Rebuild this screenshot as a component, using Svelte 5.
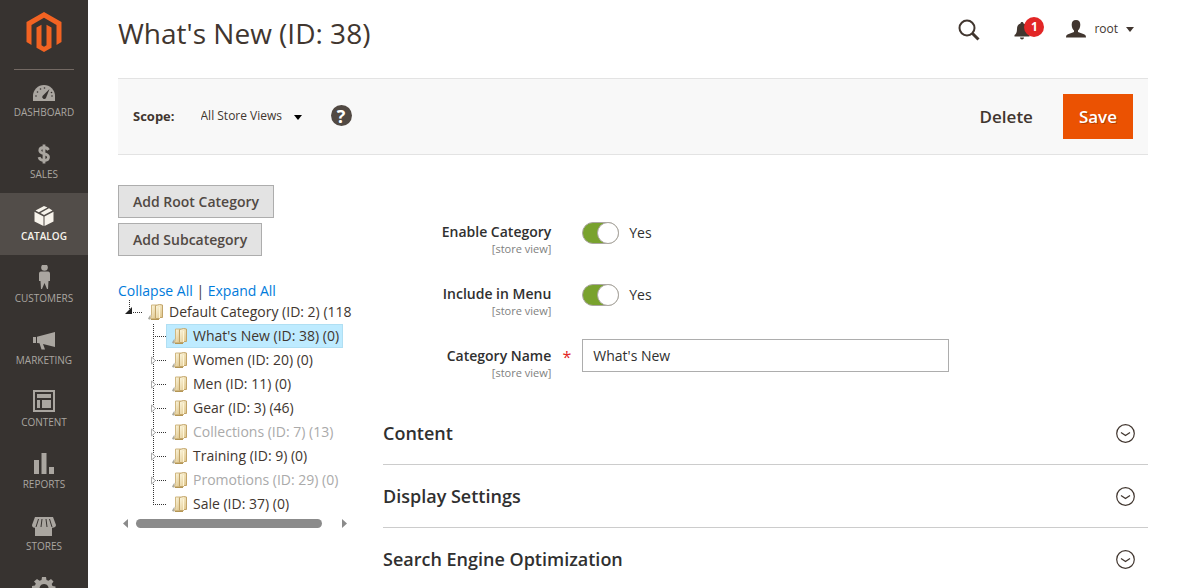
<script>
  const menu = [
    { id: 'dashboard', label: 'Dashboard' },
    { id: 'sales', label: 'Sales' },
    { id: 'catalog', label: 'Catalog' },
    { id: 'customers', label: 'Customers' },
    { id: 'marketing', label: 'Marketing' },
    { id: 'content', label: 'Content' },
    { id: 'reports', label: 'Reports' },
    { id: 'stores', label: 'Stores' },
    { id: 'system' }
  ];

  const categories = [
    { id: 38, name: "What's New", count: 0, leaf: true },
    { id: 20, name: 'Women', count: 0 },
    { id: 11, name: 'Men', count: 0 },
    { id: 3, name: 'Gear', count: 46 },
    { id: 7, name: 'Collections', count: 13, disabled: true },
    { id: 9, name: 'Training', count: 0 },
    { id: 29, name: 'Promotions', count: 0, disabled: true },
    { id: 37, name: 'Sale', count: 0, leaf: true }
  ];

  const sections = ['Content', 'Display Settings', 'Search Engine Optimization'];

  let selected = $state(38);
  let enabled = $state(true);
  let inMenu = $state(true);
  let name = $state("What's New");
</script>

{#snippet folder()}
  <svg class="folder" width="16" height="16" viewBox="0 0 16 16" aria-hidden="true">
    <defs>
      <linearGradient id="paper" x1="0" y1="0" x2="1" y2="1">
        <stop offset="0" stop-color="#fffbe6" />
        <stop offset="1" stop-color="#dcc183" />
      </linearGradient>
    </defs>
    <path d="M0 14.500l2.500-4v5H1z" fill="#a9a9a0" />
    <path d="M3.500 1h5v13.500h-6l1-3z" fill="url(#paper)" stroke="#d0b780" />
    <path d="M7.500 1.500l4-1 3 .5v12.500h-3v1h-4z" fill="url(#paper)" stroke="#c2a468" />
    <path d="M11.500 3v11" stroke="#fff5d5" />
    <path d="M3 15.500h8" stroke="#b39554" />
  </svg>
{/snippet}

<div class="page">
  <aside class="sidebar">
    <a class="logo" href="#home" aria-label="Home">
      <svg width="36" height="40" viewBox="0 0 36 40">
        <path fill="#f26322" d="M18 0L0.500 10v20l5 2.900V13L18 5.800 30.500 13v19.900l5-2.900V10z" />
        <path fill="#f26322" d="M10.500 15.500v20.300L18 40l7.500-4.200V15.500l-5-2.800v20.600L18 34.800l-2.500-1.500V12.700z" />
      </svg>
    </a>
    <nav>
      {#each menu as item}
        <a class="item" class:active={item.id === 'catalog'} href="#{item.id}" aria-label={item.id}>
          <svg width="26" height="26" viewBox="0 0 26 26" fill="currentColor" aria-hidden="true">
            {#if item.id === 'dashboard'}
              <path d="M2 22v-5a11 11 0 0 1 22 0v5z" />
              <g class="cut"><path d="M18.500 10l-3.500 9a2 2 0 0 1-3.500-2z" /><circle cx="5" cy="17" r=".8" /><circle cx="6.500" cy="13" r=".8" /><circle cx="9.500" cy="10" r=".8" /><circle cx="13.500" cy="9" r=".8" /><circle cx="21" cy="17" r=".8" /><circle cx="20.500" cy="13.500" r=".8" /></g>
            {:else if item.id === 'sales'}
              <path d="M17.500 9C16.500 7 15 6.500 13 6.500c-2.600 0-4.200 1-4.200 2.900 0 4.300 8.700 2 8.700 6.600 0 2.200-1.800 3.500-4.500 3.500-2.500 0-4.300-1-5-3.300M13 3.500v19" fill="none" stroke="currentColor" stroke-width="2.800" />
            {:else if item.id === 'catalog'}
              <path d="M13 3l3.500 1.600-8.700 4.600L4.500 7.500zM18 5.300l3.500 2.200-8.500 4.600-3.500-2zM3.500 8.800l9 4.600V23l-9-4.500zM22.500 8.800V18.500l-9 4.500v-9.600z" />
            {:else if item.id === 'customers'}
              <circle cx="13.500" cy="2.500" r="3.300" />
              <path d="M10 6.500h7c1.500 0 2 1 2 2.500V16h-1.500L17 24h-1l-2.500-6-2.500 6h-1l-.5-8H8V9c0-1.500.5-2.500 2-2.500z" />
            {:else if item.id === 'marketing'}
              <path d="M2 10h3v6H2zM6 9.800L24 5v15L12 17l2 5.500h-3.500L8.500 16.300 6 16z" />
            {:else if item.id === 'content'}
              <path fill-rule="evenodd" d="M2 1h22v22H2zM4 3v18h18V3zM6 5h14v4H6zM6 11h3v8H6zM11 11h9v8h-9z" />
            {:else if item.id === 'reports'}
              <path d="M3 9h5v14H3zM10.500 2h5v21h-5zM18 16h5v7h-5z" />
            {:else if item.id === 'stores'}
              <path d="M4 4h18l3 8c0 2.500-3 3-4 2.500v8.500H4v-8.500c-1 .5-3 0-3-2.500z" />
              <path class="cut-line" d="M7.500 6L5 14M11 6l-1 8M15 6l1 8M18.500 6l2.500 8" />
            {:else}
              <path fill-rule="evenodd" d="M11 2h4l.5 3 2 .8L20 4l2.500 2.500-1.800 2.500.8 2 3 .5v4l-3 .5-.8 2L22 20l-3 3-2.500-1.800-2 .8L14 25h-3l-.5-3-2-.8L6 23l-3-3 1.800-2.500-.8-2-3-.5v-4l3-.5.8-2L3 6.500 6 4l2.500 1.800 2-.8zM13 9a4.500 4.500 0 1 0 .1 0z" />
            {/if}
          </svg>
          {#if item.label}<span>{item.label}</span>{/if}
        </a>
      {/each}
    </nav>
  </aside>

  <main>
    <header>
      <h1>What's New (ID: 38)</h1>
      <div class="tools">
        <button class="plain" aria-label="Search">
          <svg width="22" height="22" viewBox="0 0 22 22" fill="none" stroke="#41362f">
            <circle cx="9" cy="9" r="7.500" stroke-width="2" />
            <path d="M14.500 14.500l6 6" stroke-width="3" />
          </svg>
        </button>
        <button class="bell" aria-label="Notifications">
          <svg width="16" height="18" viewBox="0 0 16 18" fill="#41362f">
            <path d="M8 0c1 0 1.500.7 1.500 1.500C12 2.200 13 4 13 7c0 3.500 1 5 2.500 6v1.500H.5V13C2 12 3 10.500 3 7c0-3 1-4.800 3.500-5.500C6.500.7 7 0 8 0zM6 15.500h4c0 2.500-4 2.500-4 0z" />
          </svg>
          <span class="badge">1</span>
        </button>
        <button class="account">
          <svg width="20" height="18" viewBox="0 0 20 18" fill="#41362f">
            <path d="M10 0c3 0 4.300 2 4.300 4.800 0 2.500-1 4.700-2.300 5.700v1.500l6 2.200c1.200.5 2 1.300 2 3.300H0c0-2 .8-2.800 2-3.300L8 12v-1.500C6.700 9.500 5.700 7.300 5.700 4.800 5.700 2 7 0 10 0z" />
          </svg>
          <span>root</span>
          <svg width="8" height="5" viewBox="0 0 8 5" fill="#41362f"><path d="M0 0h8L4 5z" /></svg>
        </button>
      </div>
    </header>

    <div class="toolbar">
      <div class="store">
        <label for="scope">Scope:</label>
        <div class="scope">
          <select id="scope">
            <option>All Store Views</option>
          </select>
          <svg width="8" height="9" viewBox="0 0 8 9"><path d="M0 4h8L4 9z" /></svg>
        </div>
        <button class="help" aria-label="Help">?</button>
      </div>
      <div class="actions">
        <button class="delete">Delete</button>
        <button class="save">Save</button>
      </div>
    </div>

    <div class="columns">
      <div class="categories">
        <button class="add">Add Root Category</button>
        <button class="add">Add Subcategory</button>

        <div class="tree-actions">
          <a href="#collapse">Collapse All</a> | <a href="#expand">Expand All</a>
        </div>

        <div class="tree">
          <div class="node">
            <svg width="24" height="24" viewBox="0 0 24 24" aria-hidden="true">
              <path class="dots" d="M11.500 0v10M15 12.500h9" />
              <path d="M14 7v7H7z" fill="#222" />
            </svg>
            <a href="#category-2">{@render folder()}Default Category (ID: 2) (118</a>
          </div>
          <ul>
            {#each categories as category, i}
              <li class="node">
                <svg width="24" height="24" viewBox="0 0 24 24" aria-hidden="true">
                  <path class="dots" d={i === categories.length - 1 ? 'M11.500 0v13' : 'M11.500 0v24'} />
                  <path class="dots" d="M13 12.500h11" />
                  {#if !category.leaf}
                    <path d="M9.500 9v7l4-3.500z" fill="#fff" stroke="#aaa" />
                  {/if}
                </svg>
                <a
                  href="#category-{category.id}"
                  class:selected={selected === category.id}
                  class:disabled={category.disabled}
                  onclick={() => (selected = category.id)}
                >
                  {@render folder()}{category.name} (ID: {category.id}) ({category.count})
                </a>
              </li>
            {/each}
          </ul>
          <div class="scrollbar">
            <svg width="5" height="9" viewBox="0 0 5 9"><path d="M5 0v9L0 4.500z" /></svg>
            <div class="track"><div class="thumb"></div></div>
            <svg width="5" height="9" viewBox="0 0 5 9"><path d="M0 0v9l5-4.500z" /></svg>
          </div>
        </div>
      </div>

      <div class="details">
        <form>
          <div class="field">
            <label for="enabled">Enable Category<small>[store view]</small></label>
            <div class="control switch">
              <input id="enabled" class="toggle" type="checkbox" bind:checked={enabled} />
              <span>{enabled ? 'Yes' : 'No'}</span>
            </div>
          </div>
          <div class="field">
            <label for="in-menu">Include in Menu<small>[store view]</small></label>
            <div class="control switch">
              <input id="in-menu" class="toggle" type="checkbox" bind:checked={inMenu} />
              <span>{inMenu ? 'Yes' : 'No'}</span>
            </div>
          </div>
          <div class="field">
            <label for="name">Category Name<small>[store view]</small></label>
            <span class="required">*</span>
            <div class="control">
              <input id="name" class="text" type="text" bind:value={name} />
            </div>
          </div>
        </form>

        {#each sections as title}
          <button class="section">
            <span>{title}</span>
            <svg width="19" height="20" viewBox="0 -1 19 20" fill="none" stroke="#41362f">
              <circle cx="9.500" cy="9.500" r="8.800" stroke-width="1.200" />
              <path d="M5 8.500l4.500 3 4.500-3" stroke-width="1.300" />
            </svg>
          </button>
        {/each}
      </div>
    </div>
  </main>
</div>

<style>
  :global(body) {
    margin: 0;
    background: #fff;
  }

  .page {
    display: flex;
    height: 100vh;
    overflow: hidden;
    color: #41362f;
    font: 14px/20px 'Open Sans', sans-serif;
  }

  a {
    color: #007bdb;
    text-decoration: none;
  }

  button,
  input,
  select {
    box-sizing: border-box;
    margin: 0;
    padding: 0;
    border: 0;
    border-radius: 0;
    background: none;
    color: inherit;
    font: inherit;
  }

  button {
    cursor: pointer;
  }

  svg {
    display: block;
    flex: none;
  }

  /* sidebar */
  .sidebar {
    flex: none;
    width: 88px;
    background: #373330;
  }

  .logo {
    display: flex;
    justify-content: center;
    height: 57px;
    margin: 0 14px;
    padding-top: 12px;
    border-bottom: 1px solid #736963;
  }

  .item {
    display: flex;
    flex-direction: column;
    align-items: center;
    box-sizing: border-box;
    height: 62px;
    padding-top: 10px;
    color: #aaa6a0;
    font-size: 10px;
    line-height: 14px;
    text-transform: uppercase;
  }

  .item:first-child {
    height: 61px;
    padding-top: 9px;
  }

  .item.active {
    background: #524d49;
    color: #f7f3eb;
    font-weight: 600;
  }

  .cut {
    fill: #373330;
  }

  .cut-line {
    fill: none;
    stroke: #373330;
  }

  /* page header */
  main {
    flex: 1;
    min-width: 0;
    padding: 0 30px;
  }

  header {
    display: flex;
    align-items: center;
    justify-content: space-between;
    height: 66px;
    padding-bottom: 12px;
  }

  h1 {
    margin: 0;
    font-size: 28px;
    font-weight: 400;
    line-height: 36px;
  }

  .tools {
    display: flex;
    align-items: center;
    gap: 34px;
    padding: 0 14px 6px 0;
  }

  .bell {
    position: relative;
    margin-right: 2px;
    padding-top: 2px;
  }

  .badge {
    position: absolute;
    top: -3px;
    left: 10px;
    width: 20px;
    border-radius: 50%;
    background: #e22626;
    color: #fff;
    font-size: 12px;
    font-weight: 700;
    line-height: 20px;
  }

  .account {
    display: flex;
    align-items: center;
    gap: 8px;
    padding-bottom: 2px;
    font-size: 12px;
  }

  .toolbar {
    display: flex;
    align-items: center;
    height: 75px;
    padding: 0 15px;
    border-top: 1px solid #e3e3e3;
    border-bottom: 1px solid #e3e3e3;
    background: #f8f8f8;
  }

  .store {
    display: flex;
    align-items: center;
    padding-bottom: 2px;
    font-size: 12px;
  }

  .store label {
    font-size: 13px;
    font-weight: 700;
  }

  .scope {
    display: flex;
    align-items: center;
    margin: 0 29px 0 26px;
  }

  .scope select {
    appearance: none;
    padding-right: 20px;
  }

  .scope svg {
    margin-left: -9px;
    pointer-events: none;
  }

  .help {
    width: 21px;
    height: 21px;
    border-radius: 50%;
    background: #514943;
    color: #fff;
    font-size: 18px;
    font-weight: 700;
  }

  .actions {
    display: flex;
    align-items: center;
    gap: 30px;
    margin-left: auto;
    font-size: 17px;
    font-weight: 600;
  }

  .save {
    height: 45px;
    padding: 0 16px;
    background: #eb5202;
    color: #fff;
    text-shadow: 1px 1px 0 rgba(0, 0, 0, 0.25);
  }

  /* category tree */
  .columns {
    display: flex;
    gap: 30px;
    padding-top: 30px;
  }

  .categories {
    flex: none;
    width: 235px;
  }

  .add {
    display: block;
    height: 33px;
    margin-bottom: 5px;
    padding: 0 14px;
    border: 1px solid #adadad;
    background: #e3e3e3;
    color: #514943;
    font-weight: 600;
  }

  .tree-actions {
    height: 19px;
    margin-top: 25px;
  }

  ul {
    margin: 0;
    padding: 0 0 0 24px;
    list-style: none;
  }

  .node {
    display: flex;
    height: 24px;
    white-space: nowrap;
  }

  .node a {
    display: flex;
    align-items: center;
    box-sizing: border-box;
    padding: 0 3px 0 5px;
    border: 1px solid transparent;
    color: #41362f;
  }

  .node a.selected {
    border-color: #b0dff3;
    background: #beebff;
  }

  .node a.disabled {
    color: #aaa;
  }

  .folder {
    margin-right: 5px;
  }

  .dots {
    fill: none;
    stroke: #333;
    stroke-dasharray: 1 1;
  }

  .scrollbar {
    display: flex;
    align-items: center;
    gap: 8px;
    height: 15px;
    padding: 0 6px 0 5px;
    fill: #8b8b8b;
  }

  .track {
    flex: 1;
  }

  .thumb {
    width: 94%;
    height: 9px;
    border-radius: 5px;
    background: #8b8b8b;
  }

  /* category form */
  .details {
    flex: 1;
    min-width: 0;
    padding-top: 30px;
  }

  form {
    display: grid;
    gap: 22px;
    padding-bottom: 23px;
  }

  .field {
    display: grid;
    grid-template-columns: 22% 31px 48%;
    height: 40px;
    color: #303030;
  }

  .field label {
    padding-top: 7px;
    font-weight: 600;
    text-align: right;
  }

  .field small {
    display: block;
    color: #808080;
    font-size: 11px;
    font-weight: 400;
    line-height: 13px;
  }

  .required {
    padding-top: 8px;
    color: #e22626;
    font-size: 16px;
    text-align: center;
  }

  .control {
    display: flex;
    grid-column: 3;
    align-items: center;
    gap: 10px;
    height: 33px;
  }

  .switch {
    height: 36px;
  }

  .toggle {
    appearance: none;
    width: 37px;
    height: 22px;
    border: 1px solid #aaa6a0;
    border-radius: 11px;
    background: #e3e3e3;
    cursor: pointer;
  }

  .toggle::before {
    content: '';
    display: block;
    box-sizing: border-box;
    width: 22px;
    height: 22px;
    margin: -1px;
    border: 1px solid #aaa6a0;
    border-radius: 50%;
    background: #fff;
  }

  .toggle:checked {
    background: #79a22e;
  }

  .toggle:checked::before {
    margin-left: 14px;
  }

  .text {
    width: 100%;
    height: 33px;
    padding: 0 10px;
    border: 1px solid #adadad;
  }

  .section {
    display: flex;
    align-items: center;
    justify-content: space-between;
    width: 100%;
    height: 63px;
    padding-right: 13px;
    border-bottom: 1px solid #ccc;
    color: #303030;
    font-size: 18px;
    font-weight: 600;
  }
</style>
